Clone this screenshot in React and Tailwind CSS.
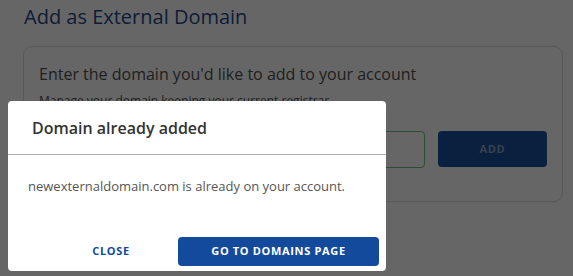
export default function App() {
  return (
    <div className="relative w-[573px] h-[276px] overflow-hidden bg-white font-['Open_Sans',sans-serif]">
      <div className="pl-[24px] pt-[2px]">
        <h1 className="text-[20px] leading-[30px] text-[#1f4a8a]">Add as External Domain</h1>
      </div>
      <div className="ml-[23px] mt-[14px] w-[540px] h-[156px] rounded-[9px] border border-[#dcdcdc] px-[15px] pt-[16px]">
        <p className="text-[16px] leading-[22px] text-[#505050]">Enter the domain you'd like to add to your account</p>
        <p className="mt-[8px] text-[12px] leading-[16px] text-[#505050]">Manage your domain keeping your current registrar</p>
        <div className="mt-[22px] flex gap-[13px]">
          <input
            className="h-[37px] w-[386px] rounded-[4px] border border-[#72c27a] px-[10px] text-[13px] outline-none"
            defaultValue=""
          />
          <button className="h-[36px] w-[109px] rounded-[4px] bg-[#17519f] text-[11px] font-bold tracking-[0.06em] text-[#8fa3c0]">
            ADD
          </button>
        </div>
      </div>

      <div className="absolute inset-0 bg-black/60" />

      <div className="absolute left-[8px] top-[101px] w-[378px] h-[170px] rounded-[4px] bg-white flex flex-col">
        <div className="h-[54px] flex items-center px-[24px] border-b border-[#b0b0b0]">
          <h2 className="text-[16px] font-semibold text-[#333333]">Domain already added</h2>
        </div>
        <p className="px-[20px] pt-[22px] text-[13px] leading-[18px] text-[#555555]">
          newexternaldomain.com is already on your account.
        </p>
        <div className="mt-auto mb-[5px] flex items-center justify-end pr-[7px]">
          <button className="w-[134px] h-[29px] text-[11px] font-bold tracking-[0.06em] text-[#134a9b]">
            CLOSE
          </button>
          <button className="w-[201px] h-[29px] rounded-[4px] bg-[#134a9b] text-[11px] font-bold tracking-[0.06em] text-white">
            GO TO DOMAINS PAGE
          </button>
        </div>
      </div>
    </div>
  );
}
